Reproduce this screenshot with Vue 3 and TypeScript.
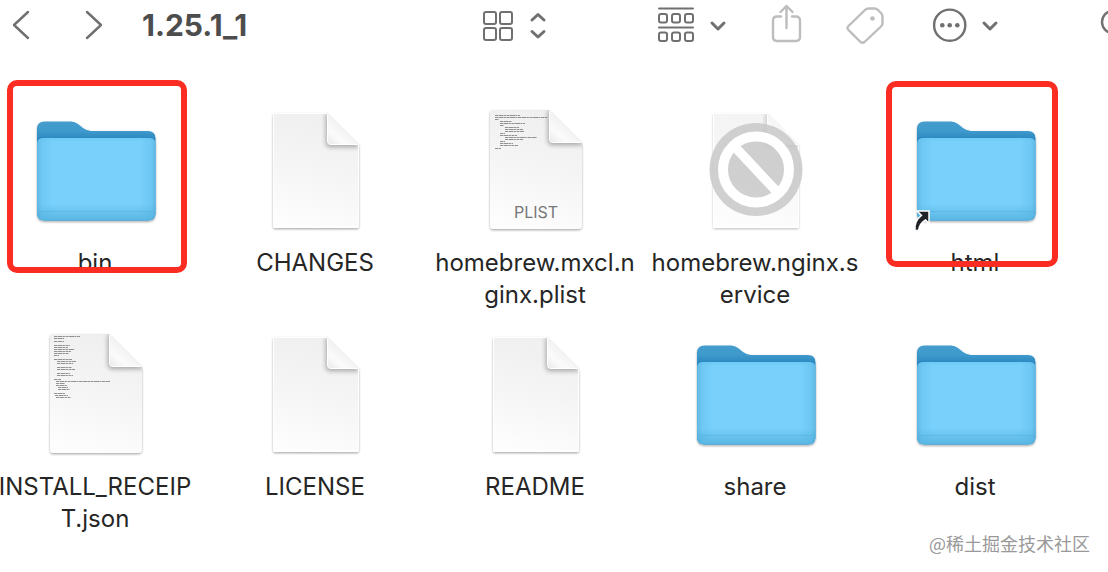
<script setup lang="ts">
type Kind = 'folder' | 'blank' | 'preview'

interface Entry {
  name: string[]
  kind: Kind
  tag?: string
  blocked?: boolean
  alias?: boolean
  mark?: 'tall' | 'short'
  code?: number[][]
}

const plistCode = [
  [24, 8, 25], [24, 10, 52], [24, 12, 4],
  [29, 14, 12], [29, 16, 25], [29, 18, 4],
  [34, 20, 14], [34, 22, 18], [34, 24, 19],
  [29, 26, 5], [29, 28, 17], [34, 30, 32], [34, 32, 18],
  [29, 34, 5], [29, 36, 13], [29, 38, 18], [24, 41, 6],
]

const jsonCode = [
  [23, 5, 26], [23, 7, 10], [23, 10, 10],
  [23, 14, 16], [23, 16, 14], [23, 18, 20], [23, 20, 17], [23, 22, 15], [23, 24, 5],
  [23, 28, 18], [26, 30, 19], [26, 32, 16],
  [26, 36, 15], [26, 38, 18], [26, 42, 13], [26, 44, 16],
  [23, 48, 7], [25, 50, 54], [25, 52, 9], [25, 54, 11], [27, 56, 10], [27, 58, 12],
  [23, 62, 11], [24, 64, 13], [25, 66, 15],
]

const entries: Entry[] = [
  { name: ['bin'], kind: 'folder', mark: 'tall' },
  { name: ['CHANGES'], kind: 'blank' },
  { name: ['homebrew.mxcl.n', 'ginx.plist'], kind: 'preview', tag: 'PLIST', code: plistCode },
  { name: ['homebrew.nginx.s', 'ervice'], kind: 'blank', blocked: true },
  { name: ['html'], kind: 'folder', alias: true, mark: 'short' },
  { name: ['INSTALL_RECEIP', 'T.json'], kind: 'preview', code: jsonCode },
  { name: ['LICENSE'], kind: 'blank' },
  { name: ['README'], kind: 'blank' },
  { name: ['share'], kind: 'folder' },
  { name: ['dist'], kind: 'folder' },
]
</script>

<template>
  <div class="finder">
    <svg class="defs" width="0" height="0" aria-hidden="true">
      <defs>
        <linearGradient id="folder-back" x1="0" y1="0" x2="0" y2="1">
          <stop offset="0" stop-color="#459dce" />
          <stop offset="0.1" stop-color="#3e99cc" />
          <stop offset="0.2" stop-color="#2582bb" />
          <stop offset="1" stop-color="#2582bb" />
        </linearGradient>
        <linearGradient id="folder-front" x1="0" y1="0" x2="0" y2="1">
          <stop offset="0" stop-color="#6fcbf7" />
          <stop offset="0.05" stop-color="#78d0fb" />
          <stop offset="0.8" stop-color="#78d0fb" />
          <stop offset="0.9" stop-color="#69c3ee" />
          <stop offset="1" stop-color="#58b5e2" />
        </linearGradient>
        <linearGradient id="folder-sides" x1="0" y1="0" x2="1" y2="0">
          <stop offset="0" stop-color="#459fcc" stop-opacity="0.5" />
          <stop offset="0.04" stop-color="#54b3df" stop-opacity="0.3" />
          <stop offset="0.13" stop-color="#54b3df" stop-opacity="0" />
          <stop offset="0.87" stop-color="#54b3df" stop-opacity="0" />
          <stop offset="0.96" stop-color="#54b3df" stop-opacity="0.3" />
          <stop offset="1" stop-color="#459fcc" stop-opacity="0.5" />
        </linearGradient>
        <linearGradient id="paper" x1="0.6" y1="0" x2="0.4" y2="1">
          <stop offset="0" stop-color="#efefef" />
          <stop offset="0.5" stop-color="#f5f5f5" />
          <stop offset="1" stop-color="#fdfdfd" />
        </linearGradient>
        <linearGradient id="curl" x1="0.1" y1="1" x2="0.6" y2="0.4">
          <stop offset="0" stop-color="#ececec" />
          <stop offset="0.4" stop-color="#fbfbfb" />
          <stop offset="1" stop-color="#f0f0f0" />
        </linearGradient>
        <filter id="drop" x="-10%" y="-10%" width="120%" height="125%">
          <feDropShadow dx="0" dy="1.2" stdDeviation="0.9" flood-color="#000" flood-opacity="0.34" />
        </filter>
        <filter id="soften" x="-30%" y="-30%" width="160%" height="160%">
          <feGaussianBlur stdDeviation="2.5" />
        </filter>
        <clipPath id="blank-clip">
          <path d="M24 6H76L108 38V119Q108 121 106 121H24Q22 121 22 119V8Q22 6 24 6Z" />
        </clipPath>
        <clipPath id="preview-clip">
          <path d="M22 3H78L111 36V118Q111 122 107 122H22Q19 122 19 118V6Q19 3 22 3Z" />
        </clipPath>
      </defs>
    </svg>

    <header class="toolbar">
      <nav class="history" aria-label="History">
        <button type="button" aria-label="Back">
          <svg width="20" height="50" viewBox="12 0 20 50"><path d="M28 12L14 25L28 38" /></svg>
        </button>
        <button type="button" aria-label="Forward">
          <svg width="20" height="50" viewBox="84 0 20 50"><path d="M87 12L101 25L87 38" /></svg>
        </button>
      </nav>
      <h1>1.25.1_1</h1>
      <button type="button" aria-label="View">
        <svg width="72" height="50" viewBox="480 0 72 50">
          <g class="thin">
            <rect x="484" y="12" width="12" height="12" rx="2" />
            <rect x="500" y="12" width="12" height="12" rx="2" />
            <rect x="484" y="28" width="12" height="12" rx="2" />
            <rect x="500" y="28" width="12" height="12" rx="2" />
          </g>
          <path class="bold" d="M532 20L538 14.500L544 20M532 31.500L538 37L544 31.500" />
        </svg>
      </button>
      <button type="button" class="arrange" aria-label="Group by">
        <svg width="76" height="50" viewBox="654 0 76 50">
          <g class="thin">
            <path d="M659 8.500H693M659 27.500H693" />
            <rect x="659" y="14" width="8" height="8.500" rx="2" />
            <rect x="672" y="14" width="8" height="8.500" rx="2" />
            <rect x="685" y="14" width="8" height="8.500" rx="2" />
            <rect x="659" y="32.500" width="8" height="8.500" rx="2" />
            <rect x="672" y="32.500" width="8" height="8.500" rx="2" />
            <rect x="685" y="32.500" width="8" height="8.500" rx="2" />
          </g>
          <path class="bold" d="M712 23L718 29L724 23" />
        </svg>
      </button>
      <button type="button" class="faint share" aria-label="Share">
        <svg width="34" height="50" viewBox="770 0 34 50">
          <path d="M781 16.500H777Q773 16.500 773 20.500V37Q773 41 777 41H796Q800 41 800 37V20.500Q800 16.500 796 16.500H792M786.500 28V6M780.500 12L786.500 6L792.500 12" />
        </svg>
      </button>
      <button type="button" class="faint tags" aria-label="Tags">
        <svg width="42" height="50" viewBox="845 0 42 50">
          <path d="M868.500 8.500H874.500Q876.500 8.500 878 10L881 13Q882.500 14.500 882.500 16.500V23.500Q882.500 25 881 26.500L864.500 42Q862.500 43.500 860.500 42L848.500 30Q846.500 28 848.500 26L865 10Q866.500 8.500 868.500 8.500Z" />
          <circle class="dot" cx="872.500" cy="18.500" r="2.300" />
        </svg>
      </button>
      <button type="button" class="more" aria-label="More actions">
        <svg width="72" height="50" viewBox="930 0 72 50">
          <circle cx="949.700" cy="25.200" r="15.600" />
          <g class="dot">
            <circle cx="942.300" cy="25.200" r="2.300" />
            <circle cx="949.700" cy="25.200" r="2.300" />
            <circle cx="957.300" cy="25.200" r="2.300" />
          </g>
          <path class="bold" d="M984 23L990 29L996 23" />
        </svg>
      </button>
      <button type="button" class="search" aria-label="Search">
        <svg width="36" height="50" viewBox="1100 0 36 50">
          <circle cx="1113" cy="22" r="11" />
          <path d="M1121 30L1130 39" />
        </svg>
      </button>
    </header>

    <main>
      <ul class="files">
        <li v-for="entry in entries" :key="entry.name[0]" class="file">
          <svg class="icon" width="128" height="128" viewBox="0 0 128 128" aria-hidden="true">
            <template v-if="entry.kind === 'folder'">
              <g filter="url(#drop)">
                <path fill="url(#folder-back)" d="M6 22Q6 14.500 13.500 14.500H40Q44 14.500 47 17L52 21Q56 24 60 24H117Q124.500 24 124.500 31.500V106Q124.500 113.500 117 113.500H13.500Q6 113.500 6 106Z" />
                <path fill="url(#folder-front)" d="M6 37Q6 31 12 31H118.500Q124.500 31 124.500 37V106Q124.500 113.500 117 113.500H13.500Q6 113.500 6 106Z" />
              </g>
              <path fill="url(#folder-sides)" d="M6 37Q6 31 12 31H118.500Q124.500 31 124.500 37V106Q124.500 113.500 117 113.500H13.500Q6 113.500 6 106Z" />
              <path d="M7 104.500H123.500" stroke="#56b2de" stroke-width="1" opacity="0.6" />
            </template>

            <template v-else-if="entry.kind === 'blank'">
              <g :opacity="entry.blocked ? 0.7 : 1">
                <path fill="url(#paper)" filter="url(#drop)" d="M24 6H76L108 38V119Q108 121 106 121H24Q22 121 22 119V8Q22 6 24 6Z" />
                <g clip-path="url(#blank-clip)">
                  <path fill="#000" opacity="0.32" filter="url(#soften)" d="M75 4V36Q75 40 79 40H110Z" />
                  <path fill="none" stroke="#fff" stroke-width="2" d="M22 6H76M22 6V120H108V38" />
                </g>
                <path fill="url(#curl)" stroke="#fff" stroke-width="1" d="M76.500 7L107 37.500H79.500Q76.500 37.500 76.500 34.500Z" />
              </g>
            </template>

            <template v-else>
              <path fill="url(#paper)" filter="url(#drop)" d="M22 3H78L111 36V118Q111 122 107 122H22Q19 122 19 118V6Q19 3 22 3Z" />
              <g clip-path="url(#preview-clip)">
                <path
                  v-for="(line, i) in entry.code"
                  :key="i"
                  :d="`M${line[0]} ${line[1] + 0.5}h${line[2]}`"
                  stroke="#444"
                  stroke-width="1"
                  stroke-dasharray="3 0.5 5 0.4 2 0.6"
                  opacity="0.55"
                />
                <path fill="#000" opacity="0.32" filter="url(#soften)" d="M77 1V34Q77 38 81 38H114Z" />
              </g>
              <path fill="url(#curl)" stroke="#fff" stroke-width="1" d="M78.500 4L110 35.500H81.500Q78.500 35.500 78.500 32.500Z" />
              <text v-if="entry.tag" class="tag" x="65" y="111" text-anchor="middle">{{ entry.tag }}</text>
            </template>

            <g v-if="entry.blocked">
              <circle cx="65" cy="62.500" r="46.500" fill="#c8c8c8" opacity="0.85" />
              <circle cx="65" cy="62.500" r="33" fill="none" stroke="#fff" stroke-width="10" />
              <path d="M43 39L87 86" stroke="#fff" stroke-width="9.500" />
            </g>
            <path
              v-if="entry.alias"
              d="M6 104H18V116.500L14.500 113Q9 116 7.500 123.500H4Q3 114 10.500 108.500Z"
              fill="#202428"
              stroke="#fff"
              stroke-width="1.500"
            />
          </svg>
          <span class="name">
            <span v-for="part in entry.name" :key="part">{{ part }}</span>
          </span>
          <span v-if="entry.mark" class="mark" :class="entry.mark"></span>
        </li>
      </ul>
    </main>

    <footer>@稀土掘金技术社区</footer>
  </div>
</template>

<style>
body {
  margin: 0;
  background: #fff;
}
</style>

<style scoped>
.finder {
  position: relative;
  overflow: hidden;
  min-height: 100vh;
  background: #fff;
  color: #262626;
  font-family: Inter, "Liberation Sans", sans-serif;
}

.defs {
  position: absolute;
}

.toolbar {
  display: flex;
  align-items: center;
  height: 50px;
  padding-left: 12px;
}

.toolbar button {
  flex: none;
  padding: 0;
  border: 0;
  background: none;
  color: #707070;
}

.toolbar svg {
  display: block;
  fill: none;
  stroke: currentColor;
  stroke-width: 2.4;
  stroke-linecap: round;
  stroke-linejoin: round;
}

.toolbar .thin {
  stroke-width: 2;
}

.toolbar .bold {
  stroke-width: 3;
}

.toolbar .dot {
  fill: currentColor;
  stroke: none;
}

.toolbar .faint {
  color: #bdbdbd;
}

.history {
  display: flex;
  gap: 52px;
}

h1 {
  flex: 1;
  margin: 0 0 0 38px;
  color: #4d4d4d;
  font-size: 30px;
  font-weight: 700;
  line-height: 50px;
}

.toolbar .arrange {
  margin-left: 102px;
}

.toolbar .share {
  margin-left: 40px;
}

.toolbar .tags {
  margin-left: 41px;
}

.toolbar .more {
  margin-left: 43px;
}

.toolbar .search {
  margin-right: -28px;
  margin-left: 98px;
}

.files {
  display: grid;
  grid-template-columns: repeat(5, 1fr);
  grid-auto-rows: minmax(204px, auto);
  row-gap: 20px;
  margin: 0 23px 0 -15px;
  padding: 57px 0 0;
  list-style: none;
}

.file {
  position: relative;
  display: flex;
  flex-direction: column;
  align-items: center;
  gap: 12px;
}

.icon {
  display: block;
}

.tag {
  fill: #777;
  font-size: 16px;
}

.name {
  font-size: 24px;
  line-height: 32px;
  text-align: center;
  white-space: nowrap;
}

.name span {
  display: block;
}

.mark {
  position: absolute;
  box-sizing: border-box;
  border: 6px solid #fb2c22;
  border-radius: 10px;
}

.mark.tall {
  top: -27px;
  left: calc(50% - 88px);
  width: 180px;
  height: 193px;
}

.mark.short {
  top: -26px;
  left: calc(50% - 89px);
  width: 172px;
  height: 186px;
}

footer {
  padding-right: 18px;
  color: #999;
  font-family: "Noto Sans CJK SC", sans-serif;
  font-size: 18px;
  line-height: 16px;
  text-align: right;
}
</style>
